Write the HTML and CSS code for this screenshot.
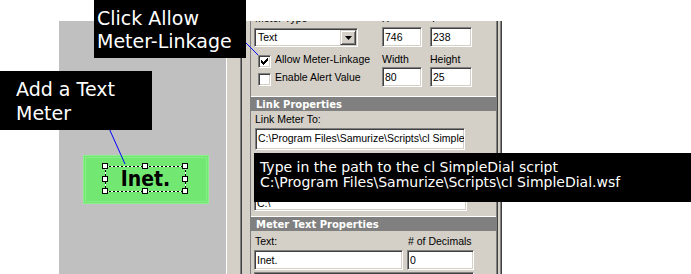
FILE: index.html
```html
<!DOCTYPE html>
<html>
<head>
<meta charset="utf-8">
<link rel="stylesheet" href="styles.css">
</head>
<body>
<div class="screen">
  <div class="gutter"></div>
  <div class="canvas">
    <div class="meter">
      <div class="selection">
        <span class="meter-text">Inet.</span>
        <i class="handle h1"></i><i class="handle h2"></i><i class="handle h3"></i>
        <i class="handle h4"></i><i class="handle h5"></i>
        <i class="handle h6"></i><i class="handle h7"></i><i class="handle h8"></i>
      </div>
    </div>
  </div>
  <div class="frame-left"></div>
  <div class="panel">
    <div class="top-grid">
      <span class="lbl first">Meter Type</span>
      <span class="lbl">X</span>
      <span class="lbl">Y</span>
      <div class="combo">
        <span class="combo-text">Text</span>
        <span class="combo-btn"><svg width="7" height="4" viewBox="0 0 7 4"><polygon points="0,0 7,0 3.5,4" fill="#000"/></svg></span>
      </div>
      <div class="field">746</div>
      <div class="field">238</div>
      <div class="checks">
        <div class="check"><span class="box"><svg width="7" height="7" viewBox="0 0 7 7"><path d="M0 2h1v1h1v1h1v-1h1v-1h1v-1h1v-1h1v3h-1v1h-1v1h-1v1h-1v1h-1v-1h-1v-1h-1z" fill="#000"/></svg></span><span class="check-text">Allow Meter-Linkage</span></div>
        <div class="check"><span class="box"></span><span class="check-text">Enable Alert Value</span></div>
      </div>
      <span class="lbl sub">Width</span>
      <span class="lbl sub">Height</span>
      <div class="field">80</div>
      <div class="field">25</div>
    </div>

    <div class="section-head">Link Properties</div>
    <div class="lbl link-lbl">Link Meter To:</div>
    <div class="field path">C:\Program Files\Samurize\Scripts\cl SimpleDial.wsf</div>
    <div class="field list"><span>C:\</span></div>

    <div class="section-head second">Meter Text Properties</div>
    <div class="pair pair-labels"><span class="lbl">Text:</span><span class="lbl"># of Decimals</span></div>
    <div class="pair pair-fields"><div class="field">Inet.</div><div class="field">0</div></div>
    <div class="field bottom-box"></div>
  </div>
  <div class="frame-right"></div>
</div>

<svg class="wires" width="691" height="274" viewBox="0 0 691 274">
  <line x1="108" y1="126" x2="125" y2="164" stroke="#0000ff" stroke-width="1"/>
  <line x1="245" y1="42" x2="258" y2="55" stroke="#0000ff" stroke-width="1"/>
</svg>

<div class="tip tip-link">Click Allow<br>Meter-Linkage</div>
<div class="tip tip-add">Add a Text<br>Meter</div>
<div class="tip tip-path">Type in the path to the cl SimpleDial script<br>C:\Program Files\Samurize\Scripts\cl SimpleDial.wsf</div>
</body>
</html>
```

FILE: styles.css
```css
html, body {
  margin: 0;
  padding: 0;
}
body {
  width: 691px;
  height: 274px;
  overflow: hidden;
  position: relative;
  background: #fff;
  font-family: "Liberation Sans", Arial, sans-serif;
  font-size: 10.5px;
  color: #000;
}

.screen {
  display: flex;
  height: 274px;
  padding-top: 21px;
  box-sizing: border-box;
}
.gutter {
  width: 59px;
  flex: none;
}
.canvas {
  width: 167px;
  flex: none;
  background: #c0c0c0;
  position: relative;
}

/* the meter on the design canvas */
.meter {
  position: absolute;
  left: 24px;
  top: 134px;
  width: 126px;
  height: 49px;
  box-sizing: border-box;
  background: #72e872;
  border: 1px solid #8cf08c;
  box-shadow: inset 0 0 0 1px #72e872, inset 0 0 0 2px #86ee86;
}
.selection {
  position: absolute;
  left: 21px;
  top: 10px;
  width: 81px;
  height: 26px;
  display: flex;
  align-items: center;
  justify-content: center;
}
.selection::before {
  content: "";
  position: absolute;
  inset: 0;
  background:
    repeating-linear-gradient(90deg, #000 0 2px, #fff 2px 4px) top / 100% 1px no-repeat,
    repeating-linear-gradient(90deg, #000 0 2px, #fff 2px 4px) bottom / 100% 1px no-repeat,
    repeating-linear-gradient(180deg, #000 0 2px, #fff 2px 4px) left / 1px 100% no-repeat,
    repeating-linear-gradient(180deg, #000 0 2px, #fff 2px 4px) right / 1px 100% no-repeat;
}
.meter-text {
  position: relative;
  font-family: "DejaVu Sans Condensed", "DejaVu Sans", sans-serif;
  font-stretch: condensed;
  font-weight: bold;
  font-size: 21px;
  line-height: 21px;
}
.handle {
  position: absolute;
  width: 6px;
  height: 6px;
  box-sizing: border-box;
  background: #fff;
  border: 1px solid #000;
}
.h1 { left: -3px; top: -3px; }
.h2 { left: 37px; top: -3px; }
.h3 { left: 77px; top: -3px; }
.h4 { left: -3px; top: 10px; }
.h5 { left: 77px; top: 10px; }
.h6 { left: -3px; top: 22px; }
.h7 { left: 37px; top: 22px; }
.h8 { left: 77px; top: 22px; }

/* window frame */
.frame-left {
  width: 24px;
  flex: none;
  box-sizing: border-box;
  border-left: 1px solid #fff;
  background: linear-gradient(90deg, #d4d0c8 0 13px, #808080 13px 14px, #404040 14px 15px, #d4d0c8 15px);
}
.frame-right {
  width: 6px;
  flex: none;
  background: linear-gradient(90deg, #808080 0 1px, #404040 1px 2px, #d4d0c8 2px 4px, #808080 4px 5px, #404040 5px 6px);
}
.panel {
  width: 246px;
  flex: none;
  box-sizing: border-box;
  border-left: 1px solid #808080;
  background: #d4d0c8;
  overflow: hidden;
  display: flex;
  flex-direction: column;
}

.lbl {
  line-height: 12px;
  white-space: nowrap;
}

.top-grid {
  display: grid;
  grid-template-columns: 120px 40px 42px;
  column-gap: 8px;
  grid-template-rows: 15px 20px 20px 20px;
  margin: -9px 0 0 3px;
  flex: none;
}
.top-grid .first {
  padding-left: 1px;
}
.top-grid .sub {
  align-self: end;
  margin-bottom: 2px;
}

.field {
  box-sizing: border-box;
  height: 20px;
  background: #fff;
  border: 1px solid;
  border-color: #808080 #fff #fff #808080;
  box-shadow: inset 1px 1px #404040, inset -1px -1px #d4d0c8;
  padding: 3px 2px 0 2px;
  line-height: 12px;
  white-space: nowrap;
  overflow: hidden;
  flex: none;
}

.combo {
  grid-column: 1;
  grid-row: 2;
  align-self: start;
  width: 104px;
  height: 19px;
  margin-top: 1px;
  box-sizing: border-box;
  background: #fff;
  border: 1px solid;
  border-color: #808080 #fff #fff #808080;
  box-shadow: inset 1px 1px #404040, inset -1px -1px #d4d0c8;
  padding: 1px 1px 1px 3px;
  display: flex;
  justify-content: space-between;
}
.combo-text {
  line-height: 12px;
  padding-top: 1px;
}
.combo-btn {
  width: 16px;
  height: 15px;
  box-sizing: border-box;
  background: #d4d0c8;
  border: 1px solid;
  border-color: #d4d0c8 #404040 #404040 #d4d0c8;
  box-shadow: inset 1px 1px #fff, inset -1px -1px #808080;
  display: flex;
  align-items: center;
  justify-content: center;
}
.combo-btn svg {
  display: block;
  margin-top: 1px;
}

.checks {
  grid-column: 1;
  grid-row: 3 / span 2;
  display: flex;
  flex-direction: column;
  gap: 5px;
  padding: 8px 0 0 4px;
}
.check {
  display: flex;
  align-items: flex-start;
  gap: 4px;
  height: 13px;
}
.box {
  width: 13px;
  height: 13px;
  box-sizing: border-box;
  flex: none;
  background: #fff;
  border: 1px solid;
  border-color: #808080 #fff #fff #808080;
  box-shadow: inset 1px 1px #404040, inset -1px -1px #d4d0c8;
  display: flex;
  align-items: center;
  justify-content: center;
}
.box svg {
  display: block;
}
.check-text {
  line-height: 13px;
  margin-top: -2px;
  white-space: nowrap;
}

.section-head {
  flex: none;
  margin-top: 9px;
  border-top: 1px solid #fff;
  height: 13px;
  padding: 1px 0 0 5px;
  background: #808080;
  color: #fff;
  font-family: "DejaVu Sans", sans-serif;
  font-weight: bold;
  font-size: 10px;
  line-height: 13px;
  white-space: nowrap;
}
.section-head.second {
  margin-top: 5px;
}

.link-lbl {
  margin: 2px 0 0 4px;
}
.field.path {
  margin: 3px 0 0 4px;
  width: 210px;
  height: 22px;
}
.field.list {
  margin: 5px 0 0 3px;
  width: 213px;
  height: 56px;
  display: flex;
  align-items: flex-end;
  padding-bottom: 1px;
}

.pair {
  display: grid;
  grid-template-columns: 149px 67px;
  column-gap: 4px;
  margin-left: 3px;
  flex: none;
}
.pair-labels {
  margin-top: 4px;
}
.pair-labels .lbl {
  padding-left: 1px;
}
.pair-fields {
  margin-top: 3px;
}
.field.bottom-box {
  margin: 2px 0 0 3px;
  width: 220px;
  height: 30px;
}

/* annotations */
.wires {
  position: absolute;
  left: 0;
  top: 0;
}
.tip {
  position: absolute;
  box-sizing: border-box;
  background: #000;
  color: #fff;
  font-family: "DejaVu Sans", sans-serif;
  white-space: nowrap;
  overflow: hidden;
}
.tip-link {
  left: 94px;
  top: 0;
  width: 152px;
  height: 58px;
  font-size: 19px;
  line-height: 23px;
  padding: 7px 0 0 3px;
}
.tip-add {
  left: 0;
  top: 71px;
  width: 152px;
  height: 59px;
  font-size: 19px;
  line-height: 24px;
  padding: 6px 0 0 16px;
}
.tip-path {
  left: 254px;
  top: 153px;
  width: 437px;
  height: 49px;
  font-size: 14px;
  line-height: 15px;
  padding: 7px 0 0 6px;
}
```
